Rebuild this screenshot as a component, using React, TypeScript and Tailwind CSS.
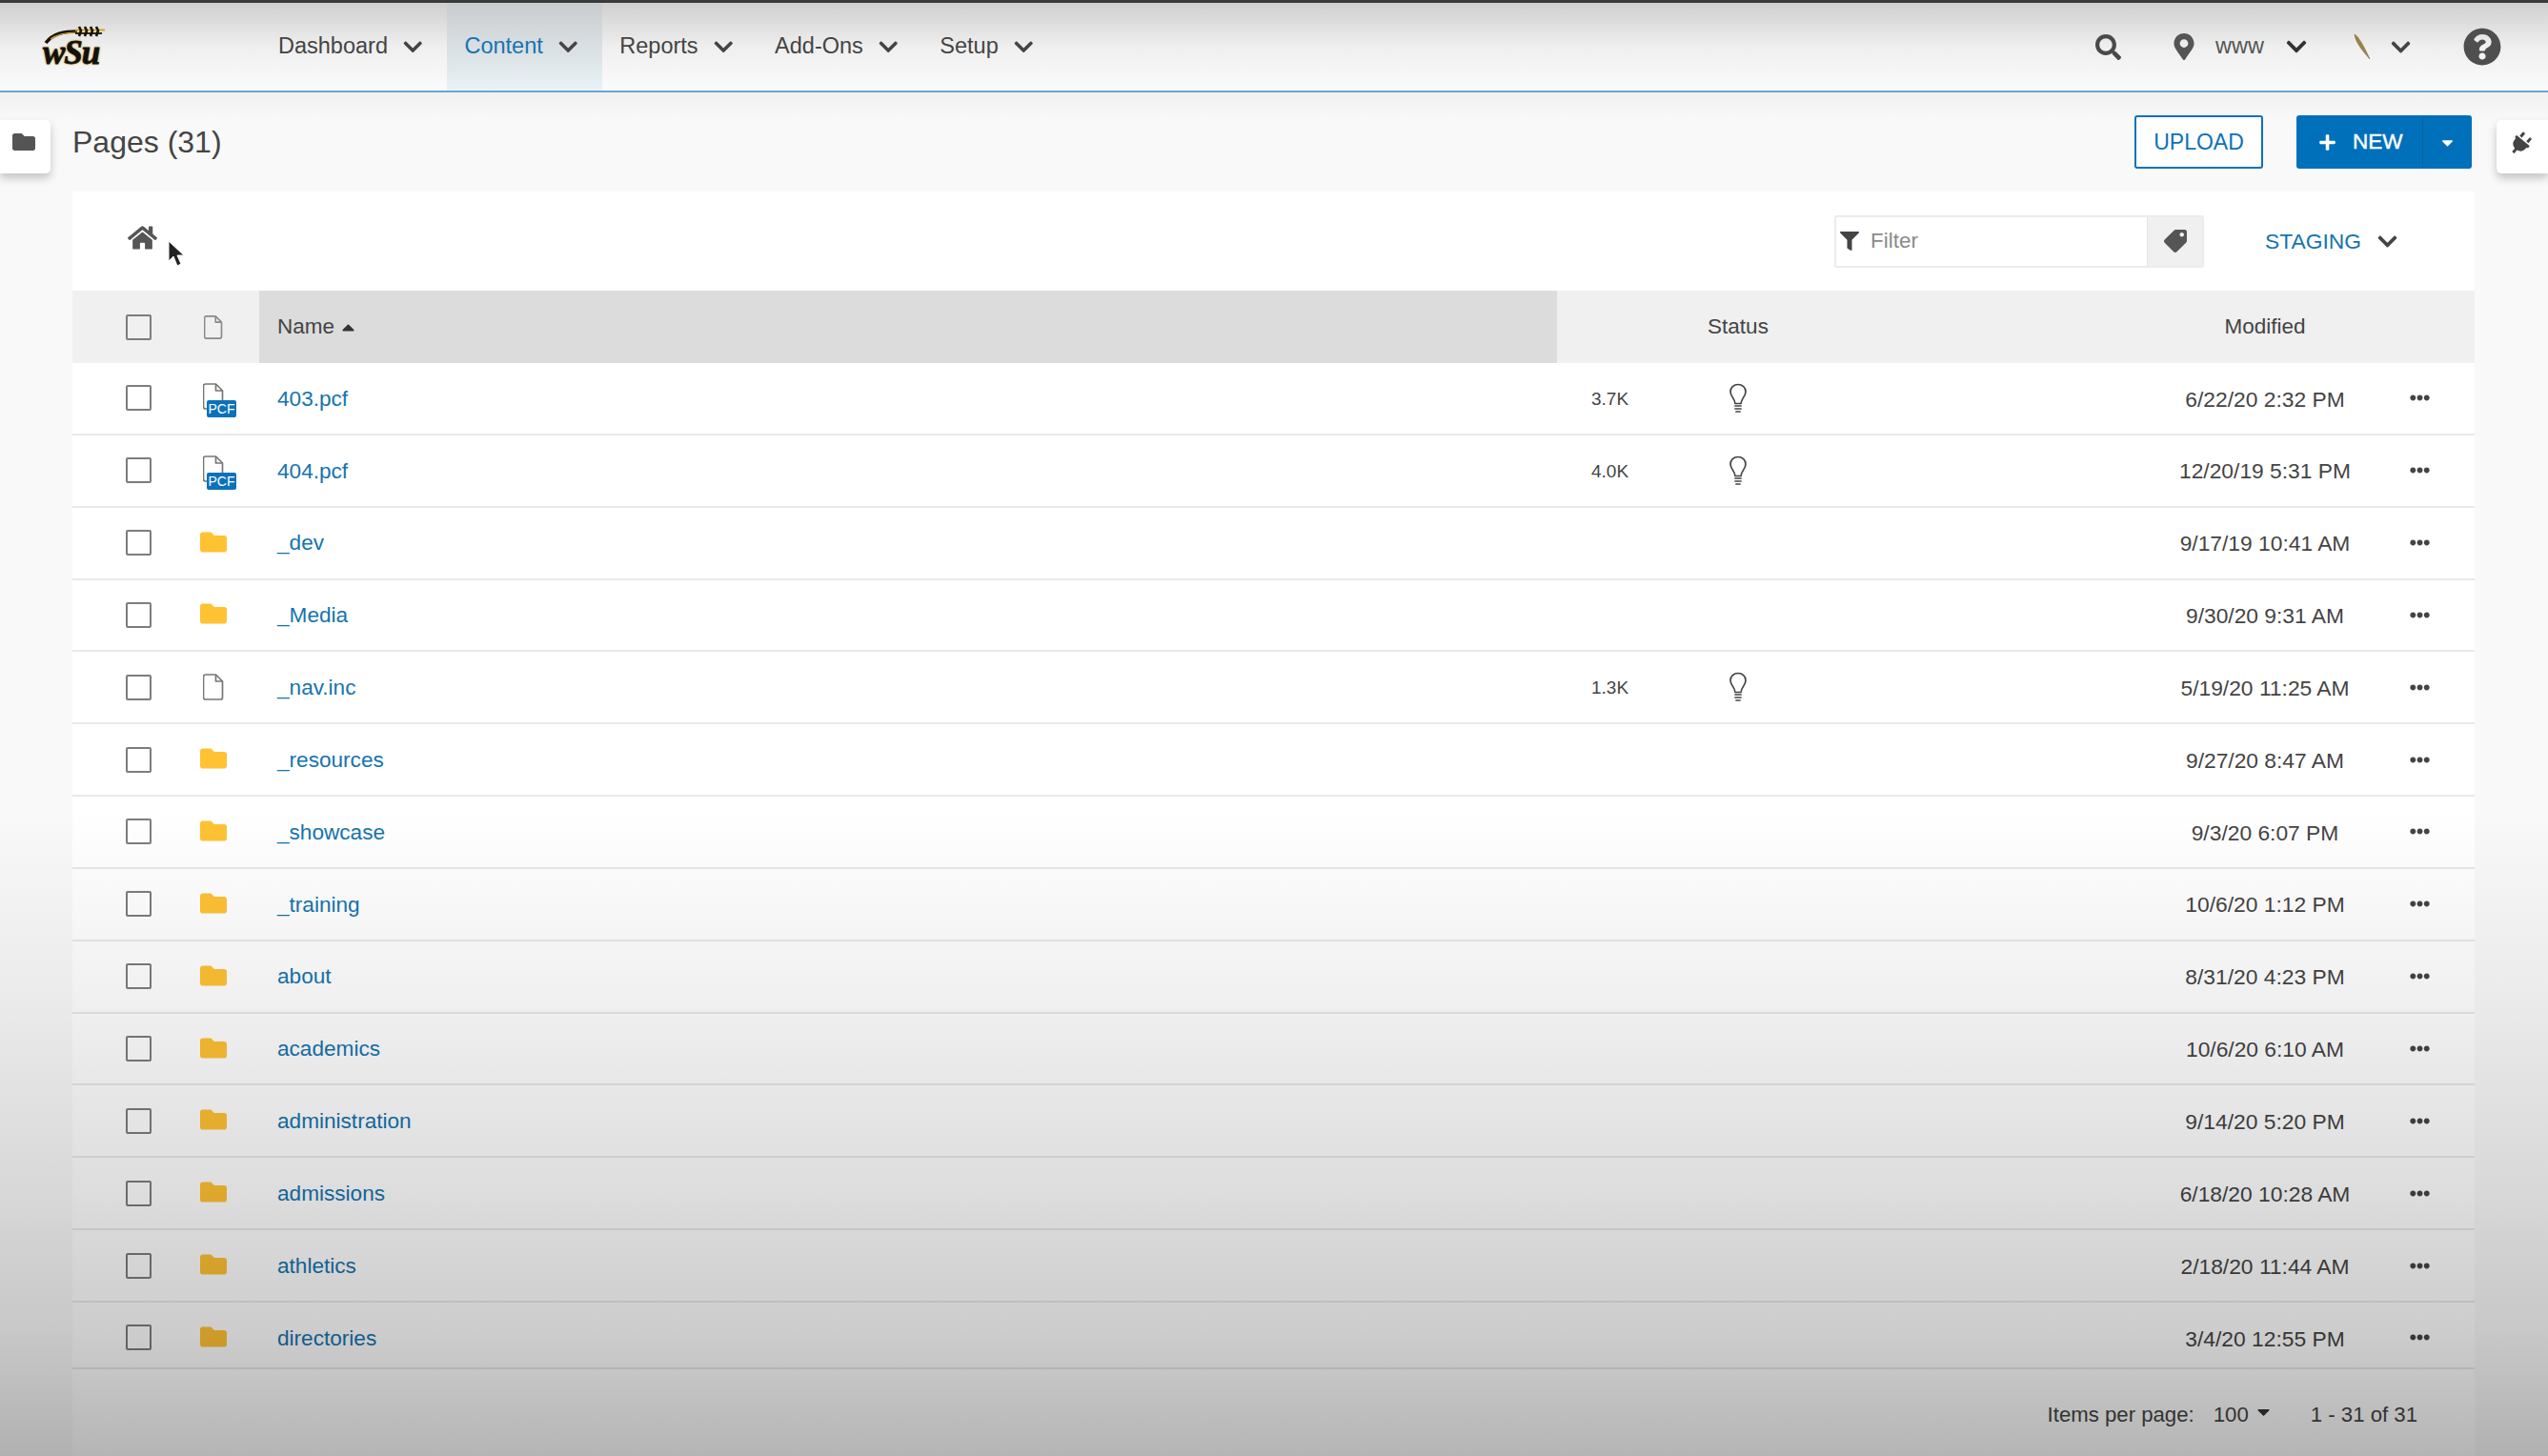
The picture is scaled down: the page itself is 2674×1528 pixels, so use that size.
import React from "react";
import {
  FaChevronDown,
  FaHome,
  FaSearch,
  FaMapMarkerAlt,
  FaQuestionCircle,
  FaFilter,
  FaTag,
  FaPlug,
  FaFolder,
  FaPlus,
  FaCaretDown,
  FaCaretUp,
  FaEllipsisH,
} from "react-icons/fa";

type Row = { name: string; kind: "pcf" | "folder" | "file"; size?: string; date: string };

const rows: Row[] = [
  { name: "403.pcf", kind: "pcf", size: "3.7K", date: "6/22/20 2:32 PM" },
  { name: "404.pcf", kind: "pcf", size: "4.0K", date: "12/20/19 5:31 PM" },
  { name: "_dev", kind: "folder", date: "9/17/19 10:41 AM" },
  { name: "_Media", kind: "folder", date: "9/30/20 9:31 AM" },
  { name: "_nav.inc", kind: "file", size: "1.3K", date: "5/19/20 11:25 AM" },
  { name: "_resources", kind: "folder", date: "9/27/20 8:47 AM" },
  { name: "_showcase", kind: "folder", date: "9/3/20 6:07 PM" },
  { name: "_training", kind: "folder", date: "10/6/20 1:12 PM" },
  { name: "about", kind: "folder", date: "8/31/20 4:23 PM" },
  { name: "academics", kind: "folder", date: "10/6/20 6:10 AM" },
  { name: "administration", kind: "folder", date: "9/14/20 5:20 PM" },
  { name: "admissions", kind: "folder", date: "6/18/20 10:28 AM" },
  { name: "athletics", kind: "folder", date: "2/18/20 11:44 AM" },
  { name: "directories", kind: "folder", date: "3/4/20 12:55 PM" },
];

function FileGlyph() {
  return (
    <svg viewBox="0 0 22 28" className="w-[22px] h-[28px] block" fill="none" stroke="#777" strokeWidth="1.7" strokeLinejoin="round">
      <path d="M2.5 1h11l7 7v17a2 2 0 0 1-2 2h-16a2 2 0 0 1-2-2V3a2 2 0 0 1 2-2z" />
      <path d="M13.5 1v7h7" />
    </svg>
  );
}

function Bulb() {
  return (
    <svg viewBox="0 0 20 32" className="w-[20px] h-[32px]" fill="none" stroke="#444" strokeWidth="1.7" strokeLinecap="round">
      <path d="M10 1.500C5.500 1.500 2 4.500 2 9c0 5 4.500 7 5 12.500h6c.5-5.500 5-7.500 5-12.500 0-4.500-3.500-7.500-8-7.500z" />
      <path d="M7 24h6M7 27h6M8 30h4" />
    </svg>
  );
}

function Checkbox() {
  return <div className="w-[27px] h-[27px] border-2 border-[#7d7d7d] rounded-[2px] bg-transparent shrink-0" />;
}

function RowIcon({ kind }: { kind: Row["kind"] }) {
  if (kind === "folder") {
    return <FaFolder className="text-[#ffc233] ml-[51px] mt-[-2px]" size={28} />;
  }
  if (kind === "file") {
    return (
      <div className="ml-[54px]">
        <FileGlyph />
      </div>
    );
  }
  return (
    <div className="relative ml-[54px] mt-[5px] w-[35px] h-[37px]">
      <FileGlyph />
      <div className="absolute left-[4px] top-[18px] w-[31px] h-[18px] rounded-[2px] bg-[#0b72b9] text-white text-[14px] leading-[18px] text-center">
        PCF
      </div>
    </div>
  );
}

function NavItem({ label, active }: { label: string; active?: boolean }) {
  return (
    <div
      className={
        "h-full flex items-center pl-[18.5px] pr-[24.5px] gap-[15px] " +
        (active ? "bg-gradient-to-b from-[#c9ccce] to-[#e9f2f7] text-[#1574b0]" : "text-[#444]")
      }
    >
      <span className="text-[23.5px]">{label}</span>
      <FaChevronDown className="text-[#444]" size={22.5} />
    </div>
  );
}

export default function App() {
  return (
    <div className="relative w-full h-[1528px] overflow-hidden bg-[#f9f9f9] text-[#444] font-['Liberation_Sans',Arial,sans-serif]">
      {/* top bar */}
      <header className="h-[97px] flex items-stretch border-t-[3px] border-t-[#3a3a3a] border-b-[2px] border-b-[#6ba6d2] bg-gradient-to-b from-[#cfcfcf] via-[#efefef] to-[#fbfbfb] shadow-[0_6px_14px_rgba(0,0,0,0.05)]">
        <div className="w-[273.5px] shrink-0 pl-[43px] flex items-center">
          <div className="w-[68px] flex flex-col items-start -mt-[2px]">
            <svg viewBox="0 0 68 20" className="w-[68px] h-[20px]" fill="none" stroke="#1a1400" strokeWidth="2">
              <path d="M5 19C13 9 24 7 38 7" strokeWidth="3.500" />
              <path d="M10 15C18 9 27 8 38 8" stroke="#d3a526" strokeWidth="1.200" />
              <path d="M36 5.500h31" stroke="#d3a526" strokeWidth="2" />
              <path d="M36 9h28" strokeWidth="1.800" />
              <path d="M40 2l2 4-2 6M46 2l2 4-2 6M52 2l2 4-2 6M58 2l2 4-2 6" strokeWidth="2.600" />
            </svg>
            <div className="-mt-[4px] pl-[2px] font-['Liberation_Serif',serif] italic font-bold text-[35px] leading-[28px] tracking-[-1px] text-[#111] [-webkit-text-stroke:0.8px_#111] [text-shadow:0_0_3px_#d3a526,0_0_2px_#d3a526]">
              wSu
            </div>
          </div>
        </div>
        <NavItem label="Dashboard" />
        <NavItem label="Content" active />
        <NavItem label="Reports" />
        <NavItem label="Add-Ons" />
        <NavItem label="Setup" />
        <div className="flex-1" />
        <div className="flex items-center pr-[49px]">
          <FaSearch className="text-[#4a4a4a]" size={27} />
          <FaMapMarkerAlt className="text-[#555] ml-[52px]" size={28} />
          <span className="ml-[19px] text-[23.5px] text-[#555]">www</span>
          <FaChevronDown className="text-[#333] ml-[22px]" size={24} />
          <svg viewBox="0 0 20 28" className="ml-[47px] w-[20px] h-[28px]">
            <path d="M2 1C6 3 12 14 18 27 12 20 3 10 2 1z" fill="#9c8345" stroke="#7a6a3a" strokeWidth="0.6" />
          </svg>
          <FaChevronDown className="text-[#444] ml-[19px]" size={23} />
          <FaQuestionCircle className="text-[#4f4f4f] ml-[54px]" size={40} />
        </div>
      </header>

      {/* title row */}
      <div className="h-[104px] flex items-center bg-gradient-to-b from-[#f1f1f1] to-[#f9f9f9] to-[30%]">
        <div className="w-[53px] h-[56px] mt-[10px] bg-white rounded-r-[5px] shadow-[0_5px_10px_rgba(0,0,0,0.22)] flex items-center pl-[13px] shrink-0">
          <FaFolder className="text-[#555] mb-[10px]" size={24} />
        </div>
        <h1 className="ml-[23px] text-[32px] text-[#444]">Pages (31)</h1>
        <div className="flex-1" />
        <button className="w-[135px] h-[56px] border-2 border-[#0b72b9] rounded-[3px] bg-white text-[#0b72b9] text-[23px]">UPLOAD</button>
        <div className="ml-[35px] w-[184px] h-[56px] rounded-[3px] bg-[#0070bb] text-white flex items-center">
          <div className="w-[133px] h-full flex items-center pl-[23px] gap-[17px] border-r border-r-[#0a62a0]">
            <FaPlus size={19} />
            <span className="text-[22.5px] [-webkit-text-stroke:0.4px_#fff]">NEW</span>
          </div>
          <FaCaretDown className="ml-[16px]" size={19} />
        </div>
        <div className="ml-[26px] w-[54px] h-[56px] mt-[10px] bg-white rounded-l-[5px] shadow-[0_5px_10px_rgba(0,0,0,0.22)] flex items-center pl-[13px] shrink-0">
          <FaPlug className="text-[#444] rotate-[40deg] mb-[6px]" size={24} />
        </div>
      </div>

      {/* card */}
      <main className="ml-[76px] w-[2521px] bg-white">
        <div className="relative h-[104px] flex items-center">
          <FaHome className="ml-[58px] -mt-[7px] text-[#555]" size={31} />
          <svg viewBox="0 0 18 28" className="absolute left-[99px] top-[51px] w-[18px] h-[28px]">
            <path d="M2 1v21l5-5 4 10 4-2-4-9h7z" fill="#222" stroke="#fff" strokeWidth="1" />
          </svg>
          <div className="flex-1" />
          <div className="w-[388px] h-[55px] flex border-2 border-[#ececec] rounded-[2px]">
            <div className="flex-1 flex items-center pl-[4px] gap-[12px]">
              <FaFilter className="text-[#444]" size={20} />
              <span className="text-[22.5px] text-[#8a8a8a]">Filter</span>
            </div>
            <div className="w-[58px] bg-[#f0f0f0] border-l border-l-[#e4e4e4] flex items-center justify-center">
              <FaTag className="text-[#555] rotate-[90deg]" size={24} />
            </div>
          </div>
          <span className="ml-[64px] text-[22.800px] text-[#1574b0]">STAGING</span>
          <FaChevronDown className="ml-[16px] text-[#444] mr-[80px]" size={23} />
        </div>

        {/* header */}
        <div className="h-[76px] bg-[#f0f0f0] flex items-center text-[22.5px]">
          <div className="w-[196px] shrink-0 flex items-center pl-[56px]">
            <Checkbox />
            <div className="ml-[55px]">
              <svg viewBox="0 0 22 28" className="w-[20px] h-[25px]" fill="none" stroke="#8a8a8a" strokeWidth="1.8" strokeLinejoin="round">
                <path d="M2.500 1h11l7 7v17a2 2 0 0 1-2 2h-16a2 2 0 0 1-2-2V3a2 2 0 0 1 2-2z" />
                <path d="M13.500 1v7h7" />
              </svg>
            </div>
          </div>
          <div className="w-[1362px] shrink-0 h-full bg-[#dcdcdc] flex items-center pl-[19px] gap-[4px]">
            <span>Name</span>
            <FaCaretUp className="text-[#333]" size={21} />
          </div>
          <div className="w-[120px] shrink-0" />
          <div className="w-[140px] shrink-0 text-center">Status</div>
          <div className="flex-1" />
          <div className="w-[300px] shrink-0 text-center">Modified</div>
          <div className="w-[70px] shrink-0" />
        </div>

        {/* rows */}
        {rows.map((r, i) => (
          <div
            key={r.name}
            className={
              "flex items-center border-b-2 border-b-[#e9e9e9] box-border text-[22.6px] " +
              (i === rows.length - 1 ? "h-[70px] pt-[6px]" : "h-[75.85px]")
            }
          >
            <div className="w-[196px] shrink-0 flex items-center pl-[56px]">
              <Checkbox />
              <RowIcon kind={r.kind} />
            </div>
            <div className="w-[1362px] shrink-0 pl-[19px] pt-[1.5px] text-[#1574b0]">{r.name}</div>
            <div className="w-[120px] shrink-0 pl-[36px] pt-[2px] text-[19px]">{r.size}</div>
            <div className="w-[140px] shrink-0 flex justify-center">{r.size ? <Bulb /> : null}</div>
            <div className="flex-1" />
            <div className="w-[300px] shrink-0 text-center pt-[1.5px] text-[22.8px]">{r.date}</div>
            <div className="w-[70px] shrink-0 pl-[2px]">
              <FaEllipsisH className="text-[#444]" size={21} />
            </div>
          </div>
        ))}

        {/* pagination */}
        <div className="h-[120px] pt-[31px] flex items-start justify-end text-[22.2px] pr-[60px]">
          <span>Items per page:</span>
          <span className="ml-[20px]">100</span>
          <FaCaretDown className="ml-[5px] mt-[3px] text-[#333]" size={21} />
          <span className="ml-[39px]">1 - 31 of 31</span>
        </div>
      </main>

      {/* video fade over the page */}
      <div className="absolute inset-0 pointer-events-none bg-[linear-gradient(to_bottom,rgba(0,0,0,0)_0,rgba(0,0,0,0)_850px,rgba(0,0,0,0.06)_1050px,rgba(0,0,0,0.13)_1240px,rgba(0,0,0,0.2)_1400px,rgba(0,0,0,0.29)_1528px)]" />
    </div>
  );
}
